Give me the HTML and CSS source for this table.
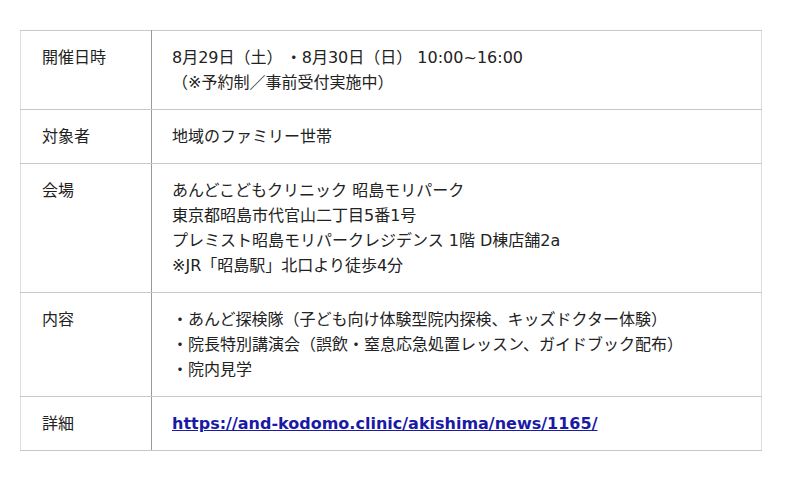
FILE: index.html
```
<!DOCTYPE html>
<html lang="ja">
<head>
<meta charset="utf-8">
<link rel="stylesheet" href="styles.css">
</head>
<body>
<table class="info">
  <tr>
    <th>開催日時</th>
    <td>8月29日（土）&#8201;・8月30日（日） 10:00~16:00<br>（※予約制／事前受付実施中）</td>
  </tr>
  <tr>
    <th>対象者</th>
    <td>地域のファミリー世帯</td>
  </tr>
  <tr>
    <th>会場</th>
    <td>あんどこどもクリニック 昭島モリパーク<br>東京都昭島市代官山二丁目5番1号<br>プレミスト昭島モリパークレジデンス 1階 D棟店舗2a<br>※JR「昭島駅」北口より徒歩4分</td>
  </tr>
  <tr>
    <th>内容</th>
    <td>・あんど探検隊（子ども向け体験型院内探検、キッズドクター体験）<br>・院長特別講演会（誤飲・窒息応急処置レッスン、ガイドブック配布）<br>・院内見学</td>
  </tr>
  <tr>
    <th>詳細</th>
    <td><a class="link" href="#">https://and-kodomo.clinic/akishima/news/1165/</a></td>
  </tr>
</table>
</body>
</html>
```
FILE: styles.css
```
html, body {
  margin: 0;
  padding: 0;
  background: #ffffff;
}
body {
  padding: 30px 20px;
  font-family: "DejaVu Sans", "Noto Sans CJK JP", sans-serif;
  font-size: 16px;
  color: #222222;
}
.info {
  border-collapse: collapse;
  width: 742px;
  border: 1px solid #dddddd;
}
.info th,
.info td {
  text-align: left;
  vertical-align: top;
  font-weight: normal;
  padding: 14px 20px;
  line-height: 25px;
  border-top: 1px solid #c8c8c8;
  border-bottom: 1px solid #c8c8c8;
}
.info th {
  width: 89px;
  padding-left: 21px;
  border-right: 1px solid #999999;
}
.info td {
  padding-left: 20px;
}
.link {
  color: #1a1aa6;
  font-weight: bold;
}
```
